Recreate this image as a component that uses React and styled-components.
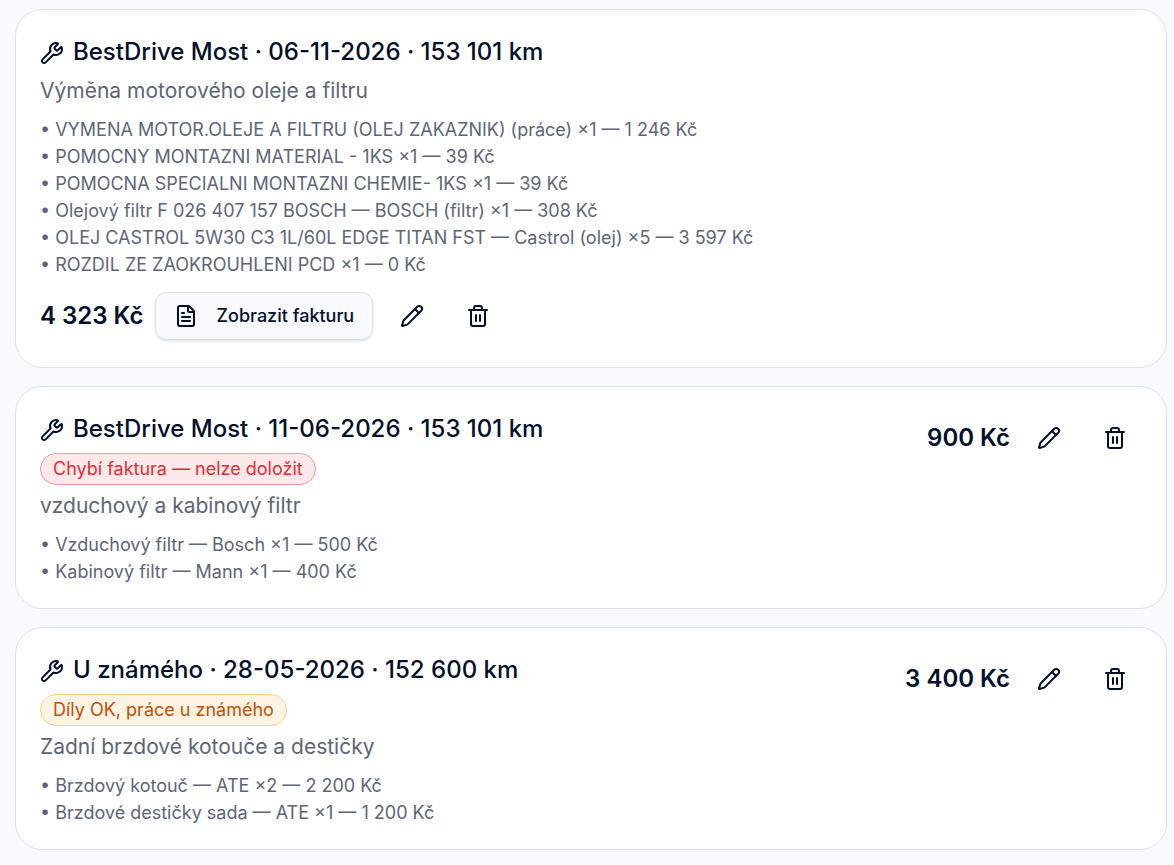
import React from "react";
import styled, { createGlobalStyle } from "styled-components";
import { FileText, Pencil, Trash2, Wrench } from "lucide-react";

const GlobalStyle = createGlobalStyle`
  * {
    box-sizing: border-box;
  }

  body {
    margin: 0;
    background: #f8faff;
    color: #020f2b;
    font-family: Inter, "Liberation Sans", sans-serif;
    font-size: 24px;
    line-height: 36px;
  }
`;

const List = styled.main`
  display: flex;
  flex-direction: column;
  gap: 18px;
  padding: 9px 7px 15px 15px;
`;

const Card = styled.article`
  display: flex;
  flex-wrap: wrap;
  align-items: flex-start;
  justify-content: space-between;
  gap: 12px;
  padding: 24px;
  background: #fff;
  border: 1px solid #dae1ea;
  border-radius: 27px;
`;

const Details = styled.div`
  display: flex;
  flex-direction: column;
  align-items: flex-start;
  gap: 6px;
`;

const Title = styled.h2`
  margin: 0;
  font-size: 24px;
  font-weight: 500;
  line-height: 36px;

  svg {
    display: inline-block;
    margin-right: 9px;
    vertical-align: middle;
  }
`;

const tones = {
  danger: { color: "#e52a35", background: "#fde9ea", border: "#f4989d" },
  warning: { color: "#bd5207", background: "#fff3e4", border: "#fdd085" },
};

const Badge = styled.span`
  padding: 3px 12px;
  border: 1px solid ${({ $tone }) => tones[$tone].border};
  border-radius: 16px;
  background: ${({ $tone }) => tones[$tone].background};
  color: ${({ $tone }) => tones[$tone].color};
  font-size: 18px;
  line-height: 24px;
`;

const Description = styled.p`
  margin: 0;
  color: #5c6678;
  font-size: 21px;
  line-height: 30px;
`;

const Items = styled.ul`
  display: flex;
  flex-direction: column;
  gap: 3px;
  margin: 6px 0 0;
  padding: 0;
  list-style: none;
  color: #5c6678;
  font-size: 18px;
  line-height: 24px;
`;

const Actions = styled.div`
  display: flex;
  align-items: center;
  gap: 12px;
`;

const Price = styled.div`
  font-weight: 600;
  white-space: nowrap;
`;

const InvoiceButton = styled.button`
  display: inline-flex;
  align-items: center;
  gap: 18px;
  height: 48px;
  padding: 0 18px;
  border: 1px solid #dae1ea;
  border-radius: 12px;
  background: #f8faff;
  box-shadow: 0 1px 3px rgba(2, 15, 43, 0.14);
  color: inherit;
  font: inherit;
  font-size: 18px;
  font-weight: 500;
  line-height: 24px;
  cursor: pointer;
`;

const IconButton = styled.button`
  display: inline-flex;
  align-items: center;
  justify-content: center;
  width: 54px;
  height: 54px;
  padding: 0;
  border: 0;
  border-radius: 12px;
  background: transparent;
  color: inherit;
  cursor: pointer;

  &:hover {
    background: #f1f4fa;
  }
`;

const records = [
  {
    id: 1,
    title: "BestDrive Most · 06-11-2026 · 153 101 km",
    description: "Výměna motorového oleje a filtru",
    items: [
      "VYMENA MOTOR.OLEJE A FILTRU (OLEJ ZAKAZNIK) (práce) ×1 — 1 246 Kč",
      "POMOCNY MONTAZNI MATERIAL - 1KS ×1 — 39 Kč",
      "POMOCNA SPECIALNI MONTAZNI CHEMIE- 1KS ×1 — 39 Kč",
      "Olejový filtr F 026 407 157 BOSCH — BOSCH (filtr) ×1 — 308 Kč",
      "OLEJ CASTROL 5W30 C3 1L/60L EDGE TITAN FST — Castrol (olej) ×5 — 3 597 Kč",
      "ROZDIL ZE ZAOKROUHLENI PCD ×1 — 0 Kč",
    ],
    price: "4 323 Kč",
    invoice: true,
  },
  {
    id: 2,
    title: "BestDrive Most · 11-06-2026 · 153 101 km",
    badge: { tone: "danger", text: "Chybí faktura — nelze doložit" },
    description: "vzduchový a kabinový filtr",
    items: [
      "Vzduchový filtr — Bosch ×1 — 500 Kč",
      "Kabinový filtr — Mann ×1 — 400 Kč",
    ],
    price: "900 Kč",
  },
  {
    id: 3,
    title: "U známého · 28-05-2026 · 152 600 km",
    badge: { tone: "warning", text: "Díly OK, práce u známého" },
    description: "Zadní brzdové kotouče a destičky",
    items: [
      "Brzdový kotouč — ATE ×2 — 2 200 Kč",
      "Brzdové destičky sada — ATE ×1 — 1 200 Kč",
    ],
    price: "3 400 Kč",
  },
];

function ServiceCard({ record }) {
  return (
    <Card>
      <Details>
        <Title>
          <Wrench size={24} />
          {record.title}
        </Title>
        {record.badge ? (
          <Badge $tone={record.badge.tone}>{record.badge.text}</Badge>
        ) : null}
        <Description>{record.description}</Description>
        <Items>
          {record.items.map((item) => (
            <li key={item}>• {item}</li>
          ))}
        </Items>
      </Details>
      <Actions>
        <Price>{record.price}</Price>
        {record.invoice ? (
          <InvoiceButton type="button">
            <FileText size={24} />
            Zobrazit fakturu
          </InvoiceButton>
        ) : null}
        <IconButton type="button" aria-label="Upravit">
          <Pencil size={24} />
        </IconButton>
        <IconButton type="button" aria-label="Smazat">
          <Trash2 size={24} />
        </IconButton>
      </Actions>
    </Card>
  );
}

function App() {
  return (
    <>
      <GlobalStyle />
      <List>
        {records.map((record) => (
          <ServiceCard key={record.id} record={record} />
        ))}
      </List>
    </>
  );
}

export default App;
